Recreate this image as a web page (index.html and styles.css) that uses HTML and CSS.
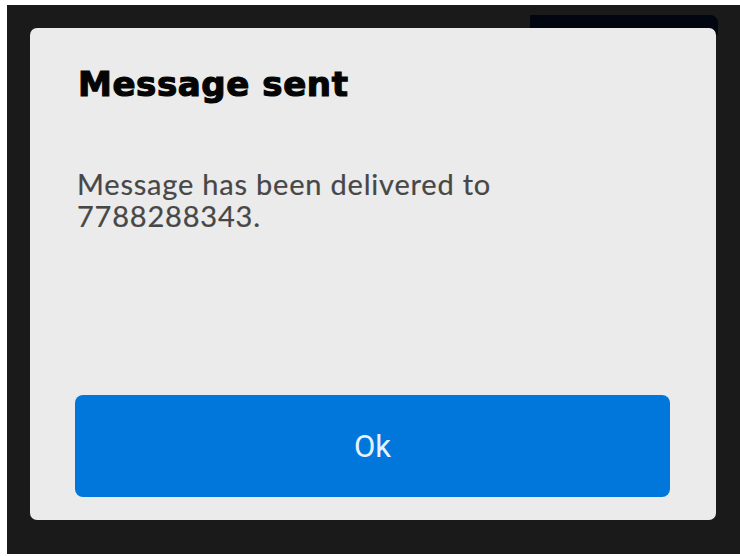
FILE: index.html
```html
<!DOCTYPE html>
<html lang="en">
<head>
    <meta charset="UTF-8">
    <meta name="viewport" content="width=device-width, initial-scale=1.0">
    <title>Message sent</title>
    <link rel="stylesheet" href="styles.css">
</head>
<body>
    <div class="screen">
        <div class="status-bar"></div>
        <div class="dialog">
            <h1 class="dialog-title">Message sent</h1>
            <p class="dialog-text">Message has been delivered to<br>7788288343.</p>
            <button class="dialog-button">Ok</button>
        </div>
    </div>
</body>
</html>
```

FILE: styles.css
```css
body {
    margin: 0;
    background: #ffffff;
    width: 740px;
    height: 556px;
    overflow: hidden;
}
.screen {
    position: relative;
    margin: 5px 0 0 7px;
    height: 549px;
    background: #1a1a1a;
    padding: 23px 24px 0 23px;
    box-sizing: border-box;
}
.status-bar {
    position: absolute;
    top: 10px;
    left: 523px;
    width: 188px;
    height: 20px;
    background: #020611;
    border-radius: 0 8px 0 0;
}
.dialog {
    position: relative;
    width: 686px;
    height: 492px;
    background: #ebebeb;
    border-radius: 7px;
    padding: 0 46px 0 45px;
    box-sizing: border-box;
    display: flex;
    flex-direction: column;
}
.dialog-title {
    font-family: "DejaVu Sans", sans-serif;
    font-weight: bold;
    font-size: 34px;
    line-height: 40px;
    letter-spacing: 0.6px;
    color: #050505;
    -webkit-text-stroke: 1.2px #050505;
    margin: 36px 0 0 3px;
}
.dialog-text {
    font-family: Lato, sans-serif;
    font-size: 29px;
    line-height: 32px;
    letter-spacing: 0.8px;
    color: #474747;
    -webkit-text-stroke: 0.2px #474747;
    margin: 64px 0 0 2px;
}
.dialog-button {
    margin-top: auto;
    margin-bottom: 23px;
    height: 102px;
    width: 595px;
    border: none;
    border-radius: 8px;
    background: #0177dc;
    color: #e6f3ff;
    font-family: Roboto, sans-serif;
    font-size: 31px;
    cursor: pointer;
}
```
